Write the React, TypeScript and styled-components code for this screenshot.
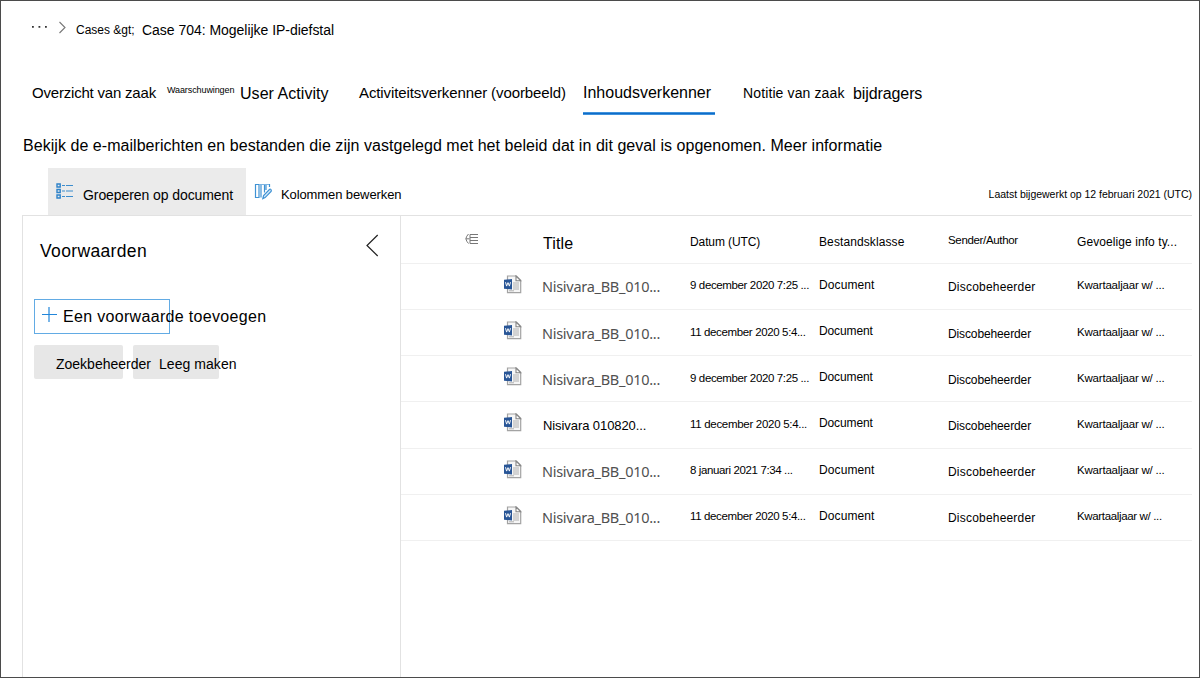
import React from 'react';
import styled, { createGlobalStyle } from 'styled-components';

const Global = createGlobalStyle`
  body { margin: 0; background: #fff; }
  *, *::after { box-sizing: border-box; }
`;

const Frame = styled.div`
  width: 1200px;
  height: 678px;
  border: 1px solid #4b4b4b;
  background: #fff;
  color: #000;
  font-family: 'Liberation Sans', Arial, sans-serif;
  display: flex;
  flex-direction: column;
  overflow: hidden;
`;

const Text = styled.span<{ $size: number; $ls?: number; $top?: number }>`
  display: block;
  flex: none;
  font-size: ${(p) => p.$size}px;
  letter-spacing: ${(p) => p.$ls ?? 0}px;
  margin-top: ${(p) => p.$top ?? 0}px;
  line-height: 20px;
  white-space: nowrap;
`;

const Breadcrumb = styled.nav`
  display: flex;
  align-items: flex-start;
  height: 69px;
  padding: 19px 0 0 30px;
`;

const TrailIcon = styled.svg`
  flex: none;
  width: 45px;
  height: 16px;
`;

const Crumb = styled.div<{ $width: number }>`
  width: ${(p) => p.$width}px;
`;

const Tabs = styled.div`
  display: flex;
  align-items: flex-start;
  height: 54px;
  padding: 13px 0 0 31px;
`;

const Tab = styled.div<{ $width: number }>`
  flex: none;
  width: ${(p) => p.$width}px;
`;

const ActiveTab = styled(Tab)`
  padding-right: 28px;

  &::after {
    content: '';
    display: block;
    height: 3px;
    margin-top: 9px;
    background: #0f6cc8;
    border-top: 1px solid #3f92dc;
    border-bottom: 1px solid #3f92dc;
  }
`;

const Description = styled.div`
  height: 44px;
  padding: 12px 0 0 22px;
`;

const Toolbar = styled.div`
  display: flex;
  align-items: flex-start;
  height: 47px;
  padding: 0 7px 0 47px;
`;

const ToolButton = styled.div<{ $active?: boolean }>`
  display: flex;
  align-items: flex-start;
  height: 47px;
  width: ${(p) => (p.$active ? 198 : 170)}px;
  padding: 15px 0 0 8px;
  background: ${(p) => (p.$active ? '#ebebeb' : 'transparent')};
`;

const ToolIcon = styled.svg`
  flex: none;
  width: 18px;
  height: 17px;
  margin-right: 9px;
`;

const Updated = styled.div`
  margin-left: auto;
  padding-top: 16px;
`;

const Body = styled.div`
  display: flex;
  flex: 1;
  margin: 0 7px 0 21px;
  border-top: 1px solid #e2e2e2;
`;

const Conditions = styled.aside`
  width: 379px;
  border-left: 1px solid #e2e2e2;
  border-right: 1px solid #e2e2e2;
  padding: 0 21px 0 11px;
`;

const ConditionsHead = styled.div`
  display: flex;
  justify-content: space-between;
  height: 83px;
  padding: 18px 0 0 6px;
`;

const AddButton = styled.div`
  display: flex;
  align-items: flex-start;
  width: 136px;
  height: 35px;
  border: 1px solid #62abe4;
  padding: 7px 0 0 7px;
`;

const PlusIcon = styled.svg`
  flex: none;
  width: 15px;
  height: 15px;
  margin-right: 6px;
`;

const Actions = styled.div`
  display: flex;
  gap: 10px;
  margin-top: 11px;
`;

const ActionButton = styled.div<{ $width: number; $indent: number }>`
  width: ${(p) => p.$width}px;
  height: 34px;
  border-radius: 2px;
  background: #e7e7e7;
  padding: 9px 0 0 ${(p) => p.$indent}px;
`;

const ActionLabel = styled(Text)`
  position: relative;
  z-index: 1;
`;

const Table = styled.div`
  flex: 1;
`;

const Row = styled.div<{ $height: number }>`
  display: grid;
  grid-template-columns: 103px 39px 147px 129px 129px 129px 1fr;
  align-items: start;
  height: ${(p) => p.$height}px;
  border-bottom: 1px solid #f0f0f0;
`;

const GroupIcon = styled.svg`
  width: 15px;
  height: 12px;
  margin: 17px 0 0 64px;
`;

const FileIcon = styled.svg`
  width: 18px;
  height: 19px;
  margin-top: 11px;
`;

const FileName = styled(Text)`
  margin-left: -1px;
  font-family: 'Noto Sans', 'Open Sans', sans-serif;
  color: #505050;
`;

const WordDocument = () => (
  <FileIcon viewBox="0 0 18 19">
    <path d="M3.5 1h9l4.2 4.3v12.4H3.500z" fill="#f6f6f6" stroke="#a3a3a3" strokeWidth="1.2" />
    <path d="M12 1v4.700h4.600z" fill="#fff" stroke="#858585" strokeWidth="1.1" />
    <path d="M9 8h6M9 10h6M9 12h6M9 14h6M5 15.800h5" stroke="#a8a8a8" strokeWidth=".9" />
    <path d="M0 4.800L8 4v10.500L0 13.700z" fill="#285596" />
    <path d="M1.500 7.200l1.100 3.900 1.400-3.500 1.400 3.500 1.100-3.900" fill="none" stroke="#fff" strokeWidth=".95" />
  </FileIcon>
);

interface Item {
  height: number;
  name: string;
  plain?: boolean;
  nameTop: number;
  date: string;
  dateSpacing: number;
  dateTop: number;
  kindSpacing: number;
  authorSpacing: number;
  authorTop: number;
  infoSpacing: number;
}

const items: Item[] = [
  { height: 46, name: 'Nisivara_BB_010...', nameTop: 12, date: '9 december 2020 7:25 ...', dateSpacing: -0.37, dateTop: 11, kindSpacing: 0.1, authorSpacing: 0.2, authorTop: 13, infoSpacing: -0.2 },
  { height: 46, name: 'Nisivara_BB_010...', nameTop: 13, date: '11 december 2020 5:4...', dateSpacing: -0.36, dateTop: 12, kindSpacing: -0.12, authorSpacing: -0.12, authorTop: 14, infoSpacing: -0.2 },
  { height: 46, name: 'Nisivara_BB_010...', nameTop: 13, date: '9 december 2020 7:25 ...', dateSpacing: -0.37, dateTop: 12, kindSpacing: -0.12, authorSpacing: -0.12, authorTop: 14, infoSpacing: -0.2 },
  { height: 47, name: 'Nisivara 010820...', plain: true, nameTop: 14, date: '11 december 2020 5:4...', dateSpacing: -0.3, dateTop: 12, kindSpacing: -0.12, authorSpacing: -0.12, authorTop: 14, infoSpacing: -0.2 },
  { height: 46, name: 'Nisivara_BB_010...', nameTop: 12, date: '8 januari 2021 7:34 ...', dateSpacing: -0.38, dateTop: 11, kindSpacing: 0.1, authorSpacing: 0.2, authorTop: 13, infoSpacing: -0.2 },
  { height: 46, name: 'Nisivara_BB_010...', nameTop: 12, date: '11 december 2020 5:4...', dateSpacing: -0.36, dateTop: 11, kindSpacing: 0.1, authorSpacing: 0.2, authorTop: 13, infoSpacing: -0.35 },
];

export default function App() {
  return (
    <>
      <Global />
      <Frame>
        <Breadcrumb>
          <TrailIcon viewBox="0 0 45 16">
            <path d="M1 6h1.800v1.800H1zM7.500 6h1.800v1.800H7.500zM14 6h1.800v1.800H14z" fill="#333" />
            <path d="M28.500 2l5.500 5.500-5.500 5.500" fill="none" stroke="#777" strokeWidth="1.1" />
          </TrailIcon>
          <Crumb $width={66}><Text $size={12}>Cases &amp;gt;</Text></Crumb>
          <Crumb $width={300}><Text $size={14} $ls={-0.03}>Case 704: Mogelijke IP-diefstal</Text></Crumb>
        </Breadcrumb>
        <Tabs>
          <Tab $width={135}><Text $size={15} $ls={-0.2}>Overzicht van zaak</Text></Tab>
          <Tab $width={73}><Text $size={9} $ls={-0.1} $top={-3}>Waarschuwingen</Text></Tab>
          <Tab $width={119}><Text $size={16} $ls={0.05} $top={1}>User Activity</Text></Tab>
          <Tab $width={224}><Text $size={15} $ls={-0.1}>Activiteitsverkenner (voorbeeld)</Text></Tab>
          <ActiveTab $width={160}><Text $size={16}>Inhoudsverkenner</Text></ActiveTab>
          <Tab $width={110}><Text $size={14} $ls={0.12}>Notitie van zaak</Text></Tab>
          <Tab $width={90}><Text $size={16} $ls={-0.1} $top={1}>bijdragers</Text></Tab>
        </Tabs>
        <Description>
          <Text $size={16} $ls={0.045}>
            Bekijk de e-mailberichten en bestanden die zijn vastgelegd met het beleid dat in dit geval is opgenomen. Meer informatie
          </Text>
        </Description>
        <Toolbar>
          <ToolButton $active>
            <ToolIcon viewBox="0 0 18 17">
              <path d="M1 1h3.200v3H1zM1 6.500h3.200v3H1zM1 12h3.200v3H1z" fill="none" stroke="#2f83c9" strokeWidth="1.4" />
              <path d="M6 2.500h3M10 2.500h7M6 8h3M10 8h7M6 13.500h3M10 13.500h7" stroke="#3c8dce" strokeWidth="1.2" />
            </ToolIcon>
            <Text $size={14} $ls={-0.08} $top={2}>Groeperen op document</Text>
          </ToolButton>
          <ToolButton>
            <ToolIcon viewBox="0 0 18 17">
              <path d="M1.500 1.500H5v13H1.500zM7 14.500v-13h3.500v8M12 7V1.500h3.500V4" fill="none" stroke="#3f92d4" strokeWidth="1.2" />
              <path d="M5 1.500h10" stroke="#7db5e3" />
              <path d="M8.800 15.700l.8-3.200 6-6.200q1.600-.5 1.700 1.300l-.2.800-6 6.200z" fill="#d4e8f8" stroke="#3f92d4" strokeWidth="1.2" />
            </ToolIcon>
            <Text $size={13} $ls={-0.1} $top={2}>Kolommen bewerken</Text>
          </ToolButton>
          <Updated><Text $size={10.5} $ls={-0.02}>Laatst bijgewerkt op 12 februari 2021 (UTC)</Text></Updated>
        </Toolbar>
        <Body>
          <Conditions>
            <ConditionsHead>
              <Text $size={17.5} $ls={0.35} $top={7}>Voorwaarden</Text>
              <svg width="13" height="23" viewBox="0 0 13 23">
                <path d="M11.700 1L1 11.500 11.700 22" fill="none" stroke="#222" strokeWidth="1.2" />
              </svg>
            </ConditionsHead>
            <AddButton>
              <PlusIcon viewBox="0 0 15 15">
                <path d="M7 0v15M0 7.500h15" stroke="#2286da" strokeWidth="1.2" />
              </PlusIcon>
              <Text $size={16} $ls={0.32}>Een voorwaarde toevoegen</Text>
            </AddButton>
            <Actions>
              <ActionButton $width={89} $indent={22}><ActionLabel $size={14}>Zoekbeheerder</ActionLabel></ActionButton>
              <ActionButton $width={86} $indent={26}><ActionLabel $size={14} $ls={0.05}>Leeg maken</ActionLabel></ActionButton>
            </Actions>
          </Conditions>
          <Table>
            <Row $height={48}>
              <GroupIcon viewBox="0 0 15 12">
                <path d="M3.500 1Q1.500 3 .8 5.800q.8 2.800 2.700 4.700M1 5.800h3.500M13 1.500H5v9h8M5 4.500h8M5 7.500h8" fill="none" stroke="#777" strokeWidth="1" />
              </GroupIcon>
              <span />
              <Text $size={16} $ls={0.1} $top={18}>Title</Text>
              <Text $size={12} $ls={-0.1} $top={16}>Datum (UTC)</Text>
              <Text $size={12} $ls={0.1} $top={16}>Bestandsklasse</Text>
              <Text $size={11.5} $ls={-0.33} $top={14}>Sender/Author</Text>
              <Text $size={12} $ls={0.08} $top={16}>Gevoelige info ty...</Text>
            </Row>
            {items.map((item, index) => (
              <Row key={index} $height={item.height}>
                <span />
                <WordDocument />
                {item.plain
                  ? <Text $size={13} $ls={-0.08} $top={item.nameTop}>{item.name}</Text>
                  : <FileName $size={14.5} $ls={-0.28} $top={item.nameTop}>{item.name}</FileName>}
                <Text $size={11.5} $ls={item.dateSpacing} $top={item.dateTop}>{item.date}</Text>
                <Text $size={12} $ls={item.kindSpacing} $top={11}>Document</Text>
                <Text $size={12} $ls={item.authorSpacing} $top={item.authorTop}>Discobeheerder</Text>
                <Text $size={11.5} $ls={item.infoSpacing} $top={item.dateTop}>Kwartaaljaar w/ ...</Text>
              </Row>
            ))}
          </Table>
        </Body>
      </Frame>
    </>
  );
}
